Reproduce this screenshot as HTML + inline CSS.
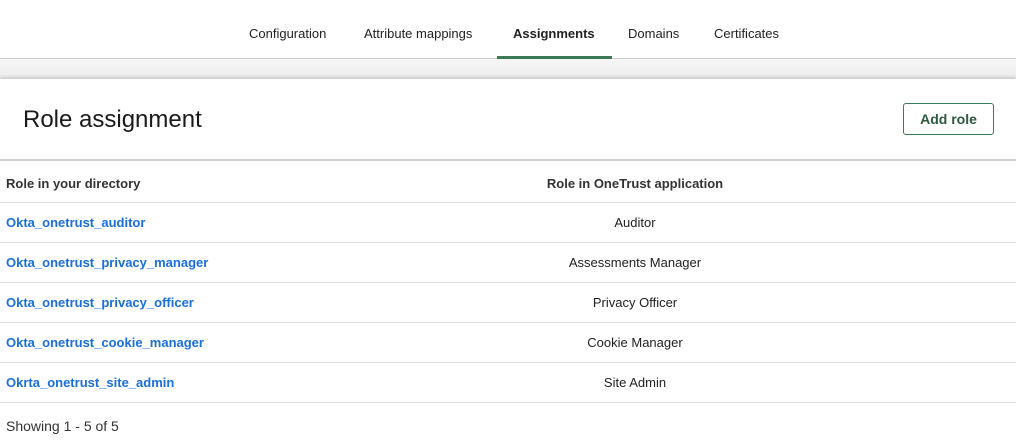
<!DOCTYPE html>
<html><head><meta charset="utf-8"><style>
*{margin:0;padding:0;box-sizing:border-box}
body{width:1016px;height:442px;background:#fff;font-family:"Liberation Sans",sans-serif;color:#1f1f1f;position:relative;overflow:hidden}
.tabs{position:absolute;top:0;left:0;width:1016px;height:59px;border-bottom:1px solid #cfcfcf}
.tab{position:absolute;top:26px;font-size:13px;color:#222}
.tab.act{font-weight:bold}
.ul{position:absolute;left:497px;width:115px;top:56px;height:3px;background:#3d7a57}
.band{position:absolute;top:59px;left:0;width:1016px;height:20px;background:linear-gradient(#f6f6f6,#ededed)}
.card{position:absolute;top:79px;left:0;width:1016px;height:363px;background:#fff;box-shadow:0 -2px 3px rgba(0,0,0,.15)}
h1{position:absolute;top:106px;left:23px;font-size:24px;font-weight:normal;color:#1a1a1a}
.btn{position:absolute;top:103px;left:903px;width:91px;height:32px;border:1px solid #3d7a57;border-radius:3px;font-size:14px;font-weight:bold;color:#2e5a42;text-align:center;line-height:30px}
.hb{position:absolute;top:159px;left:0;width:1016px;height:2px;background:#cfcfcf}
.row{position:absolute;left:0;width:1016px;height:40px;border-bottom:1px solid #dcdcdc;font-size:13px}
.c1{position:absolute;left:6px;top:12px}
.c2{position:absolute;left:535px;width:200px;text-align:center;top:12px}
.hdr{font-weight:bold;color:#333}
.lnk{color:#1a6fe0;font-weight:bold}
.foot{position:absolute;top:418px;left:6px;font-size:14px;color:#333}
</style></head><body>
<div class="tabs">
<span class="tab" style="left:249px">Configuration</span>
<span class="tab" style="left:364px">Attribute mappings</span>
<span class="tab act" style="left:513px">Assignments</span>
<span class="tab" style="left:628px">Domains</span>
<span class="tab" style="left:714px">Certificates</span>
<div class="ul"></div>
</div>
<div class="band"></div>
<div class="card"></div>
<h1>Role assignment</h1>
<div class="btn">Add role</div>
<div class="hb"></div>
<div class="row hdr" style="top:162px;height:41px"><span class="c1" style="top:14px">Role in your directory</span><span class="c2" style="top:14px">Role in OneTrust application</span></div>
<div class="row" style="top:203px"><span class="c1 lnk">Okta_onetrust_auditor</span><span class="c2">Auditor</span></div>
<div class="row" style="top:243px"><span class="c1 lnk">Okta_onetrust_privacy_manager</span><span class="c2">Assessments Manager</span></div>
<div class="row" style="top:283px"><span class="c1 lnk">Okta_onetrust_privacy_officer</span><span class="c2">Privacy Officer</span></div>
<div class="row" style="top:323px"><span class="c1 lnk">Okta_onetrust_cookie_manager</span><span class="c2">Cookie Manager</span></div>
<div class="row" style="top:363px"><span class="c1 lnk">Okrta_onetrust_site_admin</span><span class="c2">Site Admin</span></div>
<div class="foot">Showing 1 - 5 of 5</div>
</body></html>
